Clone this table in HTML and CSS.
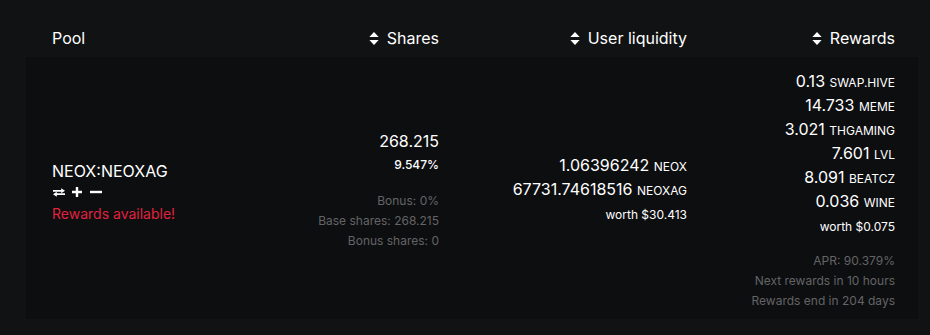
FILE: index.html
```html
<!DOCTYPE html>
<html lang="en">
<head>
  <meta charset="UTF-8" />
  <title>Pools</title>
  <link rel="stylesheet" href="styles.css">
</head>
<body>
  <div class="wrap">
    <table class="pools">
      <colgroup>
        <col class="c-pool" />
        <col class="c-shares" />
        <col class="c-liq" />
        <col class="c-rewards" />
      </colgroup>
      <thead>
        <tr>
          <th class="left">Pool</th>
          <th><svg class="sort" viewBox="0 0 10 14"><path d="M5 0 L10 5.5 H0 Z M5 14 L10 8.5 H0 Z"/></svg>Shares</th>
          <th><svg class="sort" viewBox="0 0 10 14"><path d="M5 0 L10 5.5 H0 Z M5 14 L10 8.5 H0 Z"/></svg>User liquidity</th>
          <th><svg class="sort" viewBox="0 0 10 14"><path d="M5 0 L10 5.5 H0 Z M5 14 L10 8.5 H0 Z"/></svg>Rewards</th>
        </tr>
      </thead>
      <tbody>
        <tr>
          <td class="left">
            <div class="pool-name">NEOX:NEOXAG</div>
            <div class="actions">
              <svg class="act swap" viewBox="0 0 11 8"><path d="M0 1.6 H7.5 V0 L11 2.4 L7.5 4.8 V3.2 H0 Z"/><path d="M11 4.8 H3.5 V3.2 L0 5.6 L3.5 8 V6.4 H11 Z"/></svg>
              <svg class="act plus" viewBox="0 0 10 10"><path d="M3.8 0 H6.2 V3.8 H10 V6.2 H6.2 V10 H3.8 V6.2 H0 V3.8 H3.8 Z"/></svg>
              <svg class="act minus" viewBox="0 0 12 10"><path d="M0 3.8 H12 V6.2 H0 Z"/></svg>
            </div>
            <div class="avail">Rewards available!</div>
          </td>
          <td>
            <div class="big">268.215</div>
            <div class="pct">9.547%</div>
            <div class="meta">
              <div>Bonus: 0%</div>
              <div>Base shares: 268.215</div>
              <div>Bonus shares: 0</div>
            </div>
          </td>
          <td>
            <div class="big">1.06396242 <span class="unit">NEOX</span></div>
            <div class="big">67731.74618516 <span class="unit">NEOXAG</span></div>
            <div class="worth">worth $30.413</div>
          </td>
          <td>
            <div class="big">0.13 <span class="unit">SWAP.HIVE</span></div>
            <div class="big">14.733 <span class="unit">MEME</span></div>
            <div class="big">3.021 <span class="unit">THGAMING</span></div>
            <div class="big">7.601 <span class="unit">LVL</span></div>
            <div class="big">8.091 <span class="unit">BEATCZ</span></div>
            <div class="big">0.036 <span class="unit">WINE</span></div>
            <div class="worth">worth $0.075</div>
            <div class="meta">
              <div>APR: 90.379%</div>
              <div>Next rewards in 10 hours</div>
              <div>Rewards end in 204 days</div>
            </div>
          </td>
        </tr>
      </tbody>
    </table>
  </div>
</body>
</html>
```

FILE: styles.css
```css
body {
  margin: 0;
  padding: 0;
  background-color: #111214;
  color: #ffffff;
  font-family: 'Inter', 'Noto Sans', sans-serif;
}
.wrap {
  padding: 0 12px 0 26px;
}
.pools {
  width: 892px;
  border-collapse: collapse;
  table-layout: fixed;
}
.c-pool { width: 224px; }
.c-shares { width: 212px; }
.c-liq { width: 248px; }
.c-rewards { width: 208px; }

.pools th {
  font-size: 16px;
  font-weight: 400;
  line-height: 24px;
  text-align: right;
  padding: 26px 23px 7px 0;
  white-space: nowrap;
}
.pools th.left,
.pools td.left {
  text-align: left;
  padding-left: 26px;
}
.pools td.left {
  padding-top: 16px;
}
.sort {
  width: 10px;
  height: 13px;
  fill: #ffffff;
  margin-right: 8px;
  vertical-align: -1px;
}
.pools tbody tr {
  background: #0d0e10;
}
.pools td {
  text-align: right;
  vertical-align: middle;
  padding: 12px 23px 8px 0;
  white-space: nowrap;
}

.big {
  font-size: 16px;
  line-height: 24px;
  height: 24px;
}
.unit {
  font-size: 12px;
  line-height: 1;
}
.pct {
  font-size: 12px;
  font-weight: 500;
  line-height: 24px;
}
.worth {
  font-size: 12px;
  line-height: 24px;
  padding-top: 2px;
}
.meta {
  margin-top: 12px;
  font-size: 12px;
  line-height: 20px;
  color: #636466;
}
td .pct + .meta {
  margin-top: 14px;
}

.pool-name {
  font-size: 16px;
  line-height: 22px;
}
.actions {
  display: flex;
  align-items: center;
  height: 21px;
  padding-left: 1px;
}
.act {
  fill: #ffffff;
}
.swap {
  width: 12px;
  height: 9px;
  margin-right: 7px;
}
.plus {
  width: 10px;
  height: 10px;
  margin-right: 8px;
}
.minus {
  width: 12px;
  height: 10px;
}
.avail {
  font-size: 14px;
  line-height: 22px;
  color: #e0223f;
}
```
